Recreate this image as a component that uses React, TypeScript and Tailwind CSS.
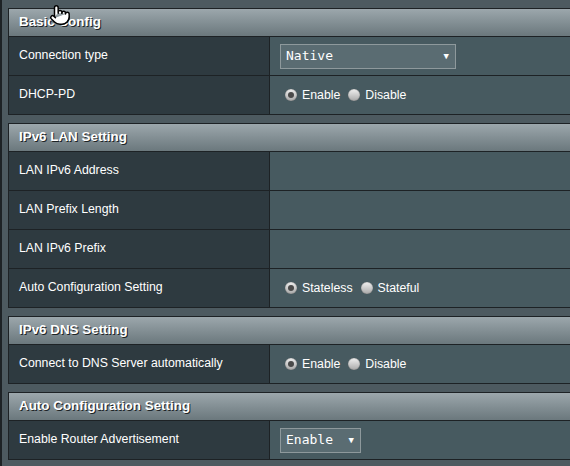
import React from 'react';
import { Pointer } from 'lucide-react';

type Row =
  | { label: string; kind: 'select'; value: string; width: string }
  | { label: string; kind: 'radio'; options: string[]; checked: number }
  | { label: string; kind: 'empty' };

interface Section {
  title: string;
  rows: Row[];
}

const SECTIONS: Section[] = [
  {
    title: 'Basic Config',
    rows: [
      { label: 'Connection type', kind: 'select', value: 'Native', width: 'w-[176px]' },
      { label: 'DHCP-PD', kind: 'radio', options: ['Enable', 'Disable'], checked: 0 },
    ],
  },
  {
    title: 'IPv6 LAN Setting',
    rows: [
      { label: 'LAN IPv6 Address', kind: 'empty' },
      { label: 'LAN Prefix Length', kind: 'empty' },
      { label: 'LAN IPv6 Prefix', kind: 'empty' },
      { label: 'Auto Configuration Setting', kind: 'radio', options: ['Stateless', 'Stateful'], checked: 0 },
    ],
  },
  {
    title: 'IPv6 DNS Setting',
    rows: [
      { label: 'Connect to DNS Server automatically', kind: 'radio', options: ['Enable', 'Disable'], checked: 0 },
    ],
  },
  {
    title: 'Auto Configuration Setting',
    rows: [
      { label: 'Enable Router Advertisement', kind: 'select', value: 'Enable', width: 'w-[81px]' },
    ],
  },
];

const Radio = ({ checked }: { checked: boolean }) => (
  <span className="w-[12px] h-[12px] rounded-full bg-gradient-to-b from-[#f2f2f2] to-[#a9a9a9] shadow-[inset_0_0_1px_#555] flex items-center justify-center">
    {checked && <span className="w-[6px] h-[6px] rounded-full bg-[#4a4a4a]" />}
  </span>
);

const Field = ({ row }: { row: Row }) => {
  if (row.kind === 'select') {
    return (
      <div
        className={`${row.width} h-[25px] border border-[#8e999c] bg-[#5a6c72] flex items-center justify-between pl-[5px] pr-[6px] text-[13px] text-white font-['DejaVu_Sans_Mono',monospace]`}
      >
        <span>{row.value}</span>
        <span className="text-[9px] leading-none">▼</span>
      </div>
    );
  }
  if (row.kind === 'radio') {
    return (
      <div className="flex items-center ml-[5px] text-[12.3px] text-white">
        {row.options.map((opt, i) => (
          <label key={opt} className="flex items-center mr-[8px]">
            <Radio checked={i === row.checked} />
            <span className="ml-[5px]">{opt}</span>
          </label>
        ))}
      </div>
    );
  }
  return null;
};

export default function App() {
  return (
    <div className="relative w-[570px] h-[466px] overflow-hidden bg-[#4d5a60] border-l-2 border-[#1d2225] pl-[6px] pt-[8px] font-['Liberation_Sans',Arial,sans-serif]">
      <div className="flex flex-col gap-[8px] w-[600px]">
        {SECTIONS.map((sec) => (
          <div key={sec.title} className="border border-[#1d2225]">
            <div className="h-[28px] border-b border-[#1d2225] bg-gradient-to-b from-[#9ca7ac] to-[#6b787d] flex items-center pl-[10px] text-[13.4px] font-bold text-white [text-shadow:1px_1px_0_#1c2326]">
              {sec.title}
            </div>
            {sec.rows.map((row, i) => (
              <div
                key={row.label}
                className={`flex ${i < sec.rows.length - 1 ? 'h-[39px] border-b border-[#1d2225]' : 'h-[38px]'}`}
              >
                <div className="w-[261px] shrink-0 bg-[#2e3a40] border-r border-[#1d2225] flex items-center pl-[10px] pb-[2px] text-[12.3px] text-white">
                  {row.label}
                </div>
                <div className="flex-1 bg-[#475a60] flex items-center pl-[10px]">
                  <Field row={row} />
                </div>
              </div>
            ))}
          </div>
        ))}
      </div>
      <Pointer
        className="absolute left-[47px] top-[4px]"
        size={22}
        fill="#ffffff"
        stroke="#000000"
        strokeWidth={1.6}
      />
    </div>
  );
}
